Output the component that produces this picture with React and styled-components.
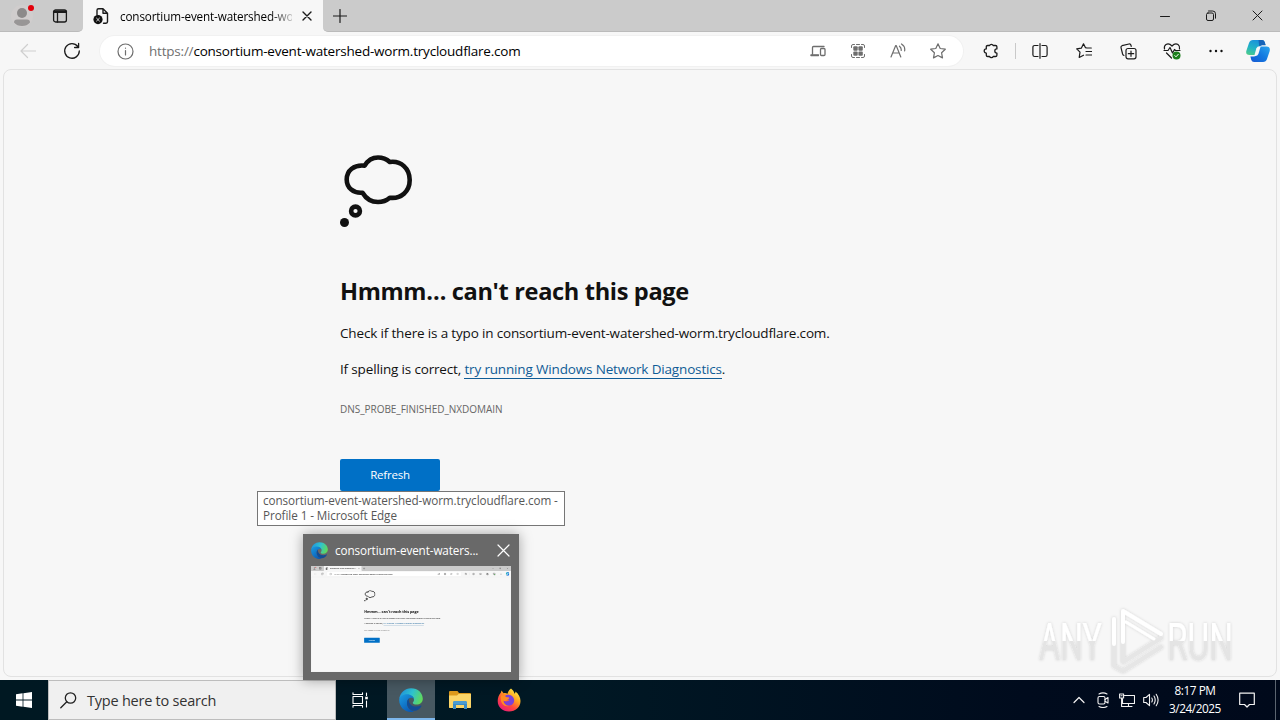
import React from "react";
import styled, { createGlobalStyle, css } from "styled-components";

const GlobalStyle = createGlobalStyle`
  * { box-sizing: border-box; }
  body {
    margin: 0;
    overflow: hidden;
    font-family: "Open Sans", "Noto Sans", sans-serif;
    color: #111;
  }
  p, h1 { margin: 0; }
  svg { display: block; flex: none; }
`;

/* ---------- desktop ---------- */

const Desktop = styled.div`
  position: relative;
  display: flex;
  flex-direction: column;
  width: 1280px;
  height: 720px;
  overflow: hidden;
`;

/* ---------- browser window ---------- */

const Window = styled.div`
  display: flex;
  flex-direction: column;
  width: 1280px;
  height: 680px;
  background: #f7f7f7;
`;

const TabStrip = styled.div`
  display: flex;
  height: 32px;
`;

const StripSection = styled.div`
  display: flex;
  align-items: center;
  height: 32px;
  background: #cbcbcb;
  border-bottom: 1px solid #bbb;
`;

const LeadingSection = styled(StripSection)`
  width: 83px;
  padding-left: 10px;
  gap: 14px;
  border-bottom-right-radius: 5px;
`;

const TrailingSection = styled(StripSection)`
  flex: 1;
  justify-content: space-between;
  border-bottom-left-radius: 5px;
`;

const Tab = styled.div`
  display: flex;
  align-items: center;
  width: 240px;
  height: 32px;
  padding: 0 6px 0 9px;
  background: #f7f7f7;
  border-radius: 6px 6px 0 0;
`;

const TabTitle = styled.div`
  width: 174px;
  margin: 0 5px 0 10px;
  overflow: hidden;
  white-space: nowrap;
  font-size: 11.7px;
  line-height: 18px;
  letter-spacing: -0.14px;
  color: #000;
  mask-image: linear-gradient(90deg, #000 150px, transparent 178px);
`;

const Slot = styled.div`
  display: flex;
  align-items: center;
  justify-content: center;
  flex: none;
  width: ${(p) => p.$w}px;
  height: ${(p) => p.$h || 31}px;
`;

const Controls = styled.div`
  display: flex;
`;

const Toolbar = styled.div`
  display: flex;
  align-items: center;
  height: 37px;
  padding: 1px 2px 0 6px;
`;

const AddressBar = styled.div`
  display: flex;
  align-items: center;
  flex: 1;
  height: 30px;
  margin: 0 6px;
  padding: 0 5px 0 17px;
  border-radius: 15px;
  background: #fff;
  box-shadow: 0 0 0 1px #f1f1f1;
`;

const Url = styled.div`
  flex: 1;
  margin-left: 15px;
  font-size: 13.5px;
  line-height: 20px;
  letter-spacing: -0.21px;
  white-space: nowrap;
  color: #000;
  span { color: #707070; }
`;

const Divider = styled.div`
  width: 1px;
  height: 16px;
  margin: 0 2px;
  background: #c9c9c9;
`;

const Page = styled.div`
  flex: 1;
  margin: 0 3px 3px 3px;
  padding: 85px 0 0 336px;
  border: 1px solid #e2e2e2;
  border-radius: 8px;
  background: #f7f7f7;
`;

const Heading = styled.h1`
  margin-top: 48px;
  font-size: 23.6px;
  font-weight: 700;
  line-height: 32px;
  letter-spacing: -0.35px;
`;

const Line = styled.p`
  margin-top: 16px;
  font-size: 13.5px;
  line-height: 20px;
  letter-spacing: -0.16px;
  white-space: nowrap;
`;

const Link = styled.span`
  color: #0f5c96;
  border-bottom: 1px solid #0f5c96;
`;

const ErrorCode = styled.p`
  margin-top: 23px;
  font-size: 10px;
  line-height: 14px;
  letter-spacing: -0.03px;
  color: #666;
`;

const RefreshButton = styled.div`
  width: 100px;
  height: 32px;
  margin-top: 43px;
  border-radius: 2px;
  background: #0070c6;
  color: #fff;
  font-size: 11.5px;
  line-height: 32px;
  text-align: center;
  letter-spacing: -0.2px;
`;

/* ---------- overlays ---------- */

const Tooltip = styled.div`
  position: absolute;
  left: 257px;
  top: 491px;
  width: 308px;
  height: 35px;
  padding: 1px 5px;
  border: 1px solid #767676;
  background: #fff;
  color: #575757;
  font-size: 11.7px;
  line-height: 15px;
  white-space: nowrap;
  letter-spacing: -0.08px;
`;

const Preview = styled.div`
  position: absolute;
  left: 303px;
  top: 534px;
  width: 216px;
  height: 146px;
  padding: 0 8px;
  background: #696969;
  box-shadow: 0 0 12px rgba(0, 0, 0, 0.35);
`;

const PreviewHeader = styled.div`
  display: flex;
  align-items: center;
  height: 32px;
  color: #fff;
  font-size: 11.7px;
`;

const PreviewTitle = styled.div`
  flex: 1;
  margin-left: 7px;
  padding-bottom: 1px;
  white-space: nowrap;
  letter-spacing: -0.1px;
`;

const Thumbnail = styled.div`
  width: 200px;
  height: 106px;
  overflow: hidden;
`;

const ThumbnailScale = styled.div`
  width: 1280px;
  height: 680px;
  transform: scale(0.15625);
  transform-origin: 0 0;
`;

const Watermark = styled.svg`
  position: absolute;
  left: 1030px;
  top: 602px;
`;

/* ---------- taskbar ---------- */

const Taskbar = styled.div`
  display: flex;
  height: 40px;
  background: linear-gradient(90deg, #001822 0%, #001824 45%, #000b1d 80%, #00091b 100%);
`;

const SearchBox = styled.div`
  display: flex;
  align-items: center;
  width: 288px;
  height: 40px;
  padding-left: 11px;
  gap: 10px;
  border: 1px solid #bdbdbd;
  background: #f0f0f0;
  color: #333;
  font-size: 14.5px;
  letter-spacing: -0.23px;
`;

const TaskButton = styled.div`
  display: flex;
  align-items: center;
  justify-content: center;
  width: ${(p) => p.$w || 48}px;
  height: 40px;
  ${(p) =>
    p.$active &&
    css`
      background: #475861;
      box-shadow: inset 0 -2px 0 #7db7ec;
    `}
`;

const Spacer = styled.div`
  flex: ${(p) => (p.$w ? `0 0 ${p.$w}px` : "1")};
`;

const Clock = styled.div`
  width: 64px;
  padding-top: 1px;
  color: #fff;
  font-size: 11.8px;
  line-height: 18px;
  text-align: center;
  letter-spacing: -0.45px;
  white-space: nowrap;
`;

const ShowDesktop = styled.div`
  width: 5px;
  border-left: 1px solid #5b6470;
`;

/* ---------- icons ---------- */

const Icon = ({ size = 16, w, h, color = "#1b1b1b", sw = 1.2, children }) => (
  <svg
    width={w || size}
    height={h || size}
    viewBox={`0 0 ${w || size} ${h || size}`}
    fill="none"
    stroke={color}
    strokeWidth={sw}
    strokeLinecap="round"
    strokeLinejoin="round"
  >
    {children}
  </svg>
);

const ProfileIcon = () => (
  <Icon w={26} h={26} sw={0}>
    <circle cx="12" cy="13" r="11" fill="#d0cdcd" />
    <circle cx="12" cy="10" r="5" fill="#8c8a8a" />
    <path d="M4 19.5Q4 16.5 7 16.5H17Q20 16.5 20 19.5Q17 23 12 23T4 19.5Z" fill="#989696" />
    <circle cx="21" cy="5" r="3" fill="#e3000b" />
  </Icon>
);

const WorkspaceIcon = () => (
  <Icon size={16} sw={1.3}>
    <rect x="1.6" y="2" width="12.8" height="12" rx="2" />
    <path d="M2.2 3.8H13.8" strokeWidth="2.6" />
    <path d="M5.5 5V14" />
  </Icon>
);

const BrokenPageIcon = () => (
  <Icon size={18} sw={1.4}>
    <path d="M5 8V3.2Q5 1.7 6.5 1.7H11L15.5 6.2V14.8Q15.5 16.2 14 16.2H11.5M11 2V6.3H15.3" />
    <circle cx="6" cy="12.6" r="4.6" fill="#111" stroke="none" />
    <path d="M4.6 11.2L7.4 14M7.4 11.2L4.6 14" stroke="#ddd" strokeWidth="1" />
  </Icon>
);

const CloseIcon = ({ size = 10, color, sw = 1.2 }) => (
  <Icon size={size} color={color} sw={sw}>
    <path d={`M1 1L${size - 1} ${size - 1}M${size - 1} 1L1 ${size - 1}`} />
  </Icon>
);

const CopilotIcon = () => (
  <svg width="24" height="24" viewBox="0 0 24 24">
    <defs>
      <linearGradient id="copA" x1="0.6" y1="0" x2="0.2" y2="1">
        <stop offset="0" stopColor="#1a8fdc" />
        <stop offset="0.55" stopColor="#22b3c6" />
        <stop offset="1" stopColor="#4ccb8c" />
      </linearGradient>
      <linearGradient id="copB" x1="1" y1="0" x2="0" y2="1">
        <stop offset="0" stopColor="#2ba6ee" />
        <stop offset="0.5" stopColor="#1379e0" />
        <stop offset="1" stopColor="#1758d2" />
      </linearGradient>
    </defs>
    <path d="M13 1H16Q18 1 18.7 3L19.6 6H16Q14 6 13.2 9L11 16H3.5Q-.5 16 .3 12L3 4Q4 1 7 1Z" fill="url(#copA)" />
    <path d="M12.5 1H16Q18 1 18.7 3L19.6 6.3H16Q14 6.3 13.4 8.5Z" fill="#1764b8" />
    <path d="M11 23H8Q6 23 5.3 21L4.4 17.5H8Q10 17.5 10.8 15L13.2 7.5H20.5Q24.5 7.5 23.7 12L21 20Q20 23 17 23Z" fill="url(#copB)" />
    <path d="M10.3 9.5Q11.2 7.3 13.5 7.3H14.7L13.3 12L12.4 15Q11.6 17 9.5 17H8.2Z" fill="#f7f7f7" />
  </svg>
);

const EdgeLogo = ({ size }) => (
  <svg width={size} height={size} viewBox="0 0 24 24">
    <defs>
      <linearGradient id="edgeTop" x1="0" y1="0.3" x2="1" y2="0.6">
        <stop offset="0" stopColor="#2093dc" />
        <stop offset="0.5" stopColor="#2fc3d0" />
        <stop offset="1" stopColor="#61da57" />
      </linearGradient>
      <linearGradient id="edgeSide" x1="0" y1="0" x2="0.7" y2="1">
        <stop offset="0" stopColor="#1b9de2" />
        <stop offset="1" stopColor="#0a59b4" />
      </linearGradient>
    </defs>
    <path d="M.3 10.5C1.2 4.5 6 .2 12 .2C19 .2 23.8 5 23.8 10.7C23.8 14.3 21 16.6 17.6 16.6C15 16.6 13.8 15.7 13.8 14.8C13.8 14.2 15 13.5 15 11.7C15 9 12 7.3 8.5 7.3C4.5 7.3 1.5 9.3 .3 10.5Z" fill="url(#edgeTop)" />
    <path d="M.2 12C.2 8.5 4 6.3 8 6.3C12 6.3 15 8.7 15 11.5C14.5 10 13 9.4 11.5 9.8C9 10.5 7.7 13 8 16C8.3 19.5 11 22.5 15 23.4C14 23.8 13 23.9 12 23.9C5 23.9 .2 18.5 .2 12Z" fill="url(#edgeSide)" />
    <path d="M9.9 10.6C7 13 7.5 18 10.5 21C13 23.5 17 23.3 19.5 21.5C21 20.4 22 19.2 22.5 18C22.7 17.5 22.3 17.2 21.8 17.5C18.5 19.2 13.5 19 11.2 16C9.8 14.2 9.5 12.3 9.9 10.6Z" fill="#134c94" />
  </svg>
);

const FolderIcon = () => (
  <svg width="22" height="20" viewBox="0 0 22 20">
    <path d="M0 2Q0 1 1 1H8.5L10 3H21Q22 3 22 4V17Q22 18 21 18H1Q0 18 0 17Z" fill="#dd9a1c" />
    <path d="M0 5.5H8L9.5 4H22V17Q22 18 21 18H1Q0 18 0 17Z" fill="#fbd568" />
    <path d="M4 19V12.5Q4 11 6 11H16Q18 11 18 12.5V19H15V15H7V19Z" fill="#3a8cc6" />
    <path d="M4 14H18V12.5Q18 11 16 11H6Q4 11 4 12.5Z" fill="#4b9cd2" />
  </svg>
);

const FirefoxIcon = () => (
  <svg width="24" height="24" viewBox="0 0 24 24">
    <defs>
      <linearGradient id="fox" x1="0.85" y1="0.05" x2="0.2" y2="1">
        <stop offset="0" stopColor="#fff04a" />
        <stop offset="0.35" stopColor="#ffa51e" />
        <stop offset="0.65" stopColor="#ff453f" />
        <stop offset="1" stopColor="#e8187c" />
      </linearGradient>
    </defs>
    <path d="M14 .5C16 2 17 3.5 17.4 5.5C18.3 5.3 18.5 4.5 18.3 3.5C21.5 5.5 23.5 9.5 23.5 13C23.5 19 18.5 23.5 12 23.5C5.5 23.5 .7 19 .7 13C.7 10 1.8 7 3.8 4.8L4.5 2.5L6.6 5.2C8 4.7 9.5 5 10.5 5.8C11 3.5 12.5 1.5 14 .5Z" fill="url(#fox)" />
    <path d="M8 8C10 6 14 6.5 16 9C18.5 12.2 17 17 12.5 17.5C9 17.8 6.5 15.5 6.5 12.5C8 14 11 13.5 12.5 12L9.8 11.2C8.5 10.7 8 9.5 8 8Z" fill="#7a42d8" />
    <path d="M4 7.5C6 6.8 8 7.5 9 9C10.5 9.2 12 9.3 12.3 10C12 11 10 11.3 9.7 12.5C8.7 13.5 7 13 6.5 12.5C6.5 15 8.5 17.8 12 18C7 19.5 2.5 15 4 7.5Z" fill="#ff8b22" />
  </svg>
);

/* ---------- composed views ---------- */

const GREY = "#6e6e6e";

const BrowserWindow = () => (
  <Window>
    <TabStrip>
      <LeadingSection>
        <ProfileIcon />
        <Slot $w={20}><WorkspaceIcon /></Slot>
      </LeadingSection>
      <Tab>
        <BrokenPageIcon />
        <TabTitle>consortium-event-watershed-worm.trycloudflare.com</TabTitle>
        <Slot $w={20}><CloseIcon size={10} sw={1.4} /></Slot>
      </Tab>
      <TrailingSection>
        <Slot $w={34}>
          <Icon size={14}><path d="M7 .5V13.5M.5 7H13.5" /></Icon>
        </Slot>
        <Controls>
          <Slot $w={46}><Icon size={10} sw={1}><path d="M.5 5.5H9.5" /></Icon></Slot>
          <Slot $w={46}>
            <Icon w={10} h={11} sw={1}>
              <rect x=".5" y="3" width="7" height="7.5" rx="1.5" />
              <path d="M2.5 1H6.7Q9.5 1 9.5 3.8V8.2" />
            </Icon>
          </Slot>
          <Slot $w={46}><CloseIcon size={11} sw={1} /></Slot>
        </Controls>
      </TrailingSection>
    </TabStrip>

    <Toolbar>
      <Slot $w={44}>
        <Icon size={16} color="#cfcfcf"><path d="M15.5 8H1M7.5 1.5L1 8L7.5 14.5" /></Icon>
      </Slot>
      <Slot $w={44}>
        <Icon size={18} sw={1.3}><path d="M14.8 4.5A7.3 7.3 0 1 0 16.3 9M15.6 1.5V5.5H11.6" /></Icon>
      </Slot>
      <AddressBar>
        <Icon size={17} color={GREY}>
          <circle cx="8.5" cy="8.5" r="7.5" />
          <path d="M8.5 7.5V12M8.5 5V5.2" />
        </Icon>
        <Url><span>https://</span>consortium-event-watershed-worm.trycloudflare.com</Url>
        <Slot $w={40}>
          <Icon size={16} color={GREY} sw={1.3}>
            <path d="M2.5 11V4.5Q2.5 3.5 3.5 3.5H14M1 12.5H8.5" />
            <path d="M1 11.8H8.5" />
            <rect x="10.5" y="5.5" width="4.5" height="7" rx="1" />
          </Icon>
        </Slot>
        <Slot $w={40}>
          <Icon size={16} color={GREY} sw={1}>
            <path d="M1.5 4.5V3Q1.5 1.5 3 1.5H4.5M11.5 1.5H13Q14.5 1.5 14.5 3V4.5M14.5 11.5V13Q14.5 14.5 13 14.5H11.5M4.5 14.5H3Q1.5 14.5 1.5 13V11.5M6.5 1.5H9.5M6.5 14.5H9.5" />
            <g fill={GREY} stroke="none">
              <rect x="3.3" y="3.3" width="4.4" height="4.4" rx="1" />
              <rect x="8.4" y="3.3" width="4.4" height="4.4" rx="1" />
              <rect x="3.3" y="8.4" width="4.4" height="4.4" rx="1" />
              <rect x="8.4" y="8.4" width="4.4" height="4.4" rx="1" />
            </g>
          </Icon>
        </Slot>
        <Slot $w={40}>
          <Icon size={16} color={GREY} sw={1.2}>
            <path d="M1 14L5.7 2.5H6.2L10.8 14M2.7 10H9.2M9.5 3.2Q11.5 4.8 11.2 7.5M11.5 1Q15.5 3.5 14.6 8" />
          </Icon>
        </Slot>
        <Slot $w={40}>
          <Icon size={16} color={GREY}>
            <path d="M8 .8L10.2 5.5L15.3 6.2L11.6 9.8L12.5 14.9L8 12.5L3.5 14.9L4.4 9.8L.7 6.2L5.8 5.5Z" />
          </Icon>
        </Slot>
      </AddressBar>
      <Slot $w={44}>
        <Icon size={16} sw={1.3}>
          <path d="M4.7 2.5H6.6A1.9 1.7 0 0 1 10.2 2.5H12.5Q13.9 2.5 13.9 3.7V5.9A2.1 2.1 0 0 0 13.9 10.1V12.3Q13.9 13.5 12.5 13.5H10.2A1.9 1.7 0 0 1 6.6 13.5H4.7Q3.3 13.5 3.3 12.3V10.1A2.1 2.1 0 0 1 3.3 5.9V3.7Q3.3 2.5 4.7 2.5Z" />
        </Icon>
      </Slot>
      <Divider />
      <Slot $w={44}>
        <Icon w={17} h={16} sw={1.2}>
          <path d="M8 .7V15.3M6 2.5H2.7Q.9 2.5 .9 4.3V11.7Q.9 13.5 2.7 13.5H6M10 2.5H13.3Q15.1 2.5 15.1 4.3V11.7Q15.1 13.5 13.3 13.5H10" />
        </Icon>
      </Slot>
      <Slot $w={44}>
        <Icon size={16} sw={1.2}>
          <path d="M15.3 5H10.8L9.5 4.7L7.5 .8L5.3 5.2L.7 5.9L4 9.2L3.2 14.5L7.5 12.2M10 8.5H15.5M10 12H15.5" />
        </Icon>
      </Slot>
      <Slot $w={44}>
        <Icon size={17} sw={1.2}>
          <rect x="6" y="5.5" width="10" height="10.3" rx="2" />
          <path d="M11 8V13.3M8.3 10.7H13.7M4 12.5Q3 12.3 2.6 11L1 4.6Q.7 3.2 2 2.7L9 1Q10.5 .7 11 2.3L11.2 3.3" />
        </Icon>
      </Slot>
      <Slot $w={44}>
        <Icon size={18} sw={1.2}>
          <path d="M1.5 7Q.8 4 3 2.5Q6 .8 9 4Q12 .8 15 2.5Q17 4 16.5 7M1 8.5H5L7 5.5L9.5 11L11.5 7.5L12.5 8.5H17M3.5 11L8.5 16" />
          <circle cx="13.5" cy="13.5" r="4" fill="#1c7f1c" stroke="none" />
          <path d="M11.8 13.6L13 14.8L15.3 12.3" stroke="#fff" strokeWidth="1" />
        </Icon>
      </Slot>
      <Slot $w={44}>
        <Icon size={16} sw={0}>
          <g fill="#111">
            <circle cx="2.5" cy="8" r="1.2" />
            <circle cx="8" cy="8" r="1.2" />
            <circle cx="13.5" cy="8" r="1.2" />
          </g>
        </Icon>
      </Slot>
      <Slot $w={40}><CopilotIcon /></Slot>
    </Toolbar>

    <Page>
      <Icon size={72} color="#111" sw={4.6}>
        <path d="M24.7 10.7C28 5 32.5 2.5 38 2.5C42.5 2.5 46.5 4 49.8 7C61 5.5 69.7 13.5 69.7 25C69.7 36.5 61 44 49.8 42.7C46.5 45.5 42.5 47 38 47C31.5 47 26 43.5 22.5 37.7C13.5 38.5 6.7 33 6.7 24.5C6.7 15.5 14 9.5 24.7 10.7Z" />
        <circle cx="15.5" cy="56" r="4.4" />
        <circle cx="4.5" cy="67.5" r="4.5" fill="#111" stroke="none" />
      </Icon>
      <Heading>Hmmm… can't reach this page</Heading>
      <Line>Check if there is a typo in consortium-event-watershed-worm.trycloudflare.com.</Line>
      <Line>If spelling is correct, <Link>try running Windows Network Diagnostics</Link>.</Line>
      <ErrorCode>DNS_PROBE_FINISHED_NXDOMAIN</ErrorCode>
      <RefreshButton>Refresh</RefreshButton>
    </Page>
  </Window>
);

const AnyRunMark = () => (
  <Watermark width="248" height="77" viewBox="0 0 248 77">
    <defs>
      <linearGradient id="wm" x1="0" y1="20" x2="0" y2="58" gradientUnits="userSpaceOnUse">
        <stop offset="0.5" stopColor="#fff" />
        <stop offset="0.5" stopColor="#e4e4e4" />
      </linearGradient>
      <filter id="soft" x="-10%" y="-20%" width="120%" height="140%">
        <feDropShadow dx="0" dy="0" stdDeviation="1.7" floodColor="#000" floodOpacity="0.16" />
      </filter>
    </defs>
    <g filter="url(#soft)" fill="url(#wm)" fontFamily="Roboto, sans-serif" fontSize="52">
      <text x="9" y="58" textLength="63" lengthAdjust="spacingAndGlyphs">ANY</text>
      <text x="137" y="58" textLength="66" lengthAdjust="spacingAndGlyphs">RUN</text>
    </g>
    <g filter="url(#soft)" fill="none" strokeLinejoin="round" strokeLinecap="round">
      <path d="M84 17V64L93 69L131 45" stroke="#e6e6e6" strokeWidth="4" />
      <path d="M84 17V42" stroke="#fff" strokeWidth="4" />
      <path d="M93 9V60L131 36" stroke="#e6e6e6" strokeWidth="4" />
      <path d="M93 40V9L131 32" stroke="#fff" strokeWidth="4" />
      <path d="M96 20L124 37" stroke="#fff" strokeWidth="3" />
    </g>
  </Watermark>
);

const TRAY = "#f2f2f2";

export default function App() {
  return (
    <Desktop>
      <GlobalStyle />
      <BrowserWindow />

      <Taskbar>
        <TaskButton>
          <svg width="16" height="16" viewBox="0 0 16 16" fill="#fff">
            <path d="M0 2.2L6.6 1.3V7.6H0ZM7.4 1.2L16 0V7.6H7.4ZM0 8.4H6.6V14.7L0 13.8ZM7.4 8.4H16V16L7.4 14.8Z" />
          </svg>
        </TaskButton>
        <SearchBox>
          <Icon size={17} color="#222" sw={1.3}>
            <circle cx="10.5" cy="6" r="5.2" />
            <path d="M6.8 9.7L.8 15.8" />
          </Icon>
          Type here to search
        </SearchBox>
        <TaskButton>
          <Icon w={18} h={16} color="#fff" sw={1.1}>
            <path d="M2 .8V2.5H11.5V.8M2 4.5H11.5V11.5H2ZM2 15.2V13.5H11.5V15.2M15.5 1V3.5M15.5 9V15" />
            <rect x="14.2" y="4.7" width="2.6" height="2.6" fill="#fff" stroke="none" />
          </Icon>
        </TaskButton>
        <Spacer $w={3} />
        <TaskButton $active><EdgeLogo size={24} /></TaskButton>
        <TaskButton $w={49}><FolderIcon /></TaskButton>
        <TaskButton $w={49}><FirefoxIcon /></TaskButton>
        <Spacer />
        <Slot $w={24} $h={40}>
          <Icon w={12} h={8} color={TRAY}><path d="M1 6.5L6 1.5L11 6.5" /></Icon>
        </Slot>
        <Slot $w={24} $h={40}>
          <Icon size={16} color={TRAY} sw={1.1}>
            <rect x="3" y="4.5" width="7" height="7.5" rx="1.5" />
            <path d="M10 7.5L13 5.5V11L10 9.2M4 2Q8 -.2 12 2M4 14.5Q8 16.5 12 14.5" />
          </Icon>
        </Slot>
        <Slot $w={24} $h={40}>
          <Icon size={16} color={TRAY} sw={1.1}>
            <path d="M5.5 3.5H15.5V11.5H3.5V7M9.5 11.5V14.5M6 14.5H13M.6 2H4.6V6H.6ZM2.6 6V14.5H6M2 3.8H3.2" />
          </Icon>
        </Slot>
        <Slot $w={24} $h={40}>
          <Icon size={16} color={TRAY} sw={1.1}>
            <path d="M.7 5.5H3L6.5 2.3V13.7L3 10.5H.7ZM8.8 6Q10 8 8.8 10M11 4Q13.4 8 11 12M13.2 2.3Q17 8 13.2 13.7" />
          </Icon>
        </Slot>
        <Clock>8:17 PM<br />3/24/2025</Clock>
        <Slot $w={40} $h={40}>
          <Icon size={16} color={TRAY}><path d="M.7 1.2H15.3V12.5H10.5L8 15L5.5 12.5H.7Z" /></Icon>
        </Slot>
        <Spacer $w={8} />
        <ShowDesktop />
      </Taskbar>

      <Tooltip>consortium-event-watershed-worm.trycloudflare.com -<br />Profile 1 - Microsoft Edge</Tooltip>

      <Preview>
        <PreviewHeader>
          <EdgeLogo size={17} />
          <PreviewTitle>consortium-event-waters...</PreviewTitle>
          <Slot $w={16}><CloseIcon size={13} color="#fff" sw={1.2} /></Slot>
        </PreviewHeader>
        <Thumbnail aria-hidden="true">
          <ThumbnailScale><BrowserWindow /></ThumbnailScale>
        </Thumbnail>
      </Preview>

      <AnyRunMark />
    </Desktop>
  );
}
